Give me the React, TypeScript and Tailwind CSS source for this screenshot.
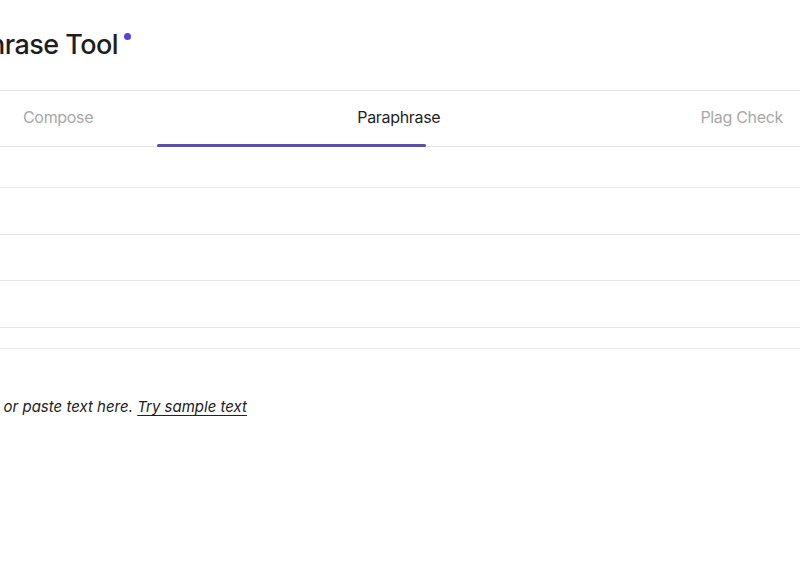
import React from "react";

const tabs = [
  { label: "Compose", active: false },
  { label: "Paraphrase", active: true },
  { label: "Plag Check", active: false },
];

export default function App() {
  return (
    <div className="w-[800px] h-[576px] bg-white overflow-hidden" style={{ fontFamily: "Inter, 'Noto Sans', sans-serif" }}>
      {/* header */}
      <div className="h-[91px] border-b border-[#e6e6e6] flex items-center pb-[2px]">
        <div className="w-[118px] flex justify-end whitespace-nowrap">
          <h1 className="relative text-[27px] font-medium tracking-[-0.02em] text-[#1e1e1e] leading-none">
            Paraphrase Tool
            <span className="absolute -right-[13px] top-[2px] w-[7px] h-[7px] rounded-full bg-[#5b3fe4]" />
          </h1>
        </div>
      </div>

      {/* tabs */}
      <div className="relative h-[56px] border-b border-[#e6e6e6] flex items-center justify-between pl-[23px] pr-[17px] pb-[4px]">
        {tabs.map((t) => (
          <button
            key={t.label}
            className={`text-[16px] tracking-[-0.02em] leading-none ${t.active ? "text-[#1f1f1f] ml-[4px]" : "text-[#a8a8a8]"}`}
          >
            {t.label}
          </button>
        ))}
        <span className="absolute left-[157px] bottom-[-1px] w-[269px] h-[3px] bg-[#5b4fa9] rounded-sm" />
      </div>

      {/* option rows */}
      <div className="h-[41px] border-b border-[#e6e6e6]" />
      <div className="h-[47px] border-b border-[#e6e6e6]" />
      <div className="h-[46px] border-b border-[#e6e6e6]" />
      <div className="h-[47px] border-b border-[#e6e6e6]" />
      <div className="h-[21px] border-b border-[#e6e6e6]" />

      {/* editor placeholder */}
      <div className="pt-[46px]">
        <div className="w-[247px] flex justify-end whitespace-nowrap">
          <p className="italic text-[15px] text-[#222] leading-6">
            Start typing or paste text here.{" "}
            <span className="underline underline-offset-[3px] decoration-[1px]">Try sample text</span>
          </p>
        </div>
      </div>
    </div>
  );
}
